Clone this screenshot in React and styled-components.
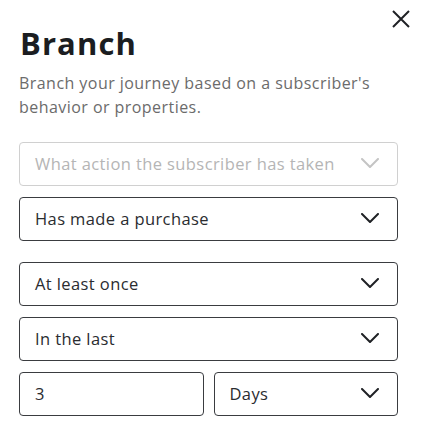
import styled, { createGlobalStyle } from "styled-components";

const GlobalStyle = createGlobalStyle`
    body {
        margin: 0;
        background: #ffffff;
        font-family: "Open Sans", "Lato", sans-serif;
    }
`

function Chevron({ light }) {
    return (
        <svg width="18" height="10" viewBox="0 0 18 10" fill="none">
            <path d="M1 1l8 8 8-8" stroke={light ? "#c4c4c4" : "#1f2125"} strokeWidth="2" strokeLinecap="round" strokeLinejoin="round" />
        </svg>
    );
}

export default function App() {
    return (
        <>
            <GlobalStyle />
            <Panel>
                <Fechar aria-label="close">
                    <svg width="18" height="18" viewBox="0 0 18 18">
                        <path d="M1 1l16 16M17 1L1 17" stroke="#1f2125" strokeWidth="2" />
                    </svg>
                </Fechar>
                <Titulo>Branch</Titulo>
                <Descricao>Branch your journey based on a subscriber's behavior or properties.</Descricao>
                <Campos>
                    <Select light>
                        <span>What action the subscriber has taken</span>
                        <Chevron light />
                    </Select>
                    <Select>
                        <span>Has made a purchase</span>
                        <Chevron />
                    </Select>
                    <Grupo>
                        <Select>
                            <span>At least once</span>
                            <Chevron />
                        </Select>
                        <Select>
                            <span>In the last</span>
                            <Chevron />
                        </Select>
                        <LadoALado>
                            <Select wide>
                                <span>3</span>
                            </Select>
                            <Select wide>
                                <span>Days</span>
                                <Chevron />
                            </Select>
                        </LadoALado>
                    </Grupo>
                </Campos>
            </Panel>
        </>
    )
}

const Panel = styled.div`
    position: relative;
    padding: 26px 23px 20px 19px;
`

const Fechar = styled.div`
    position: absolute;
    top: 10px;
    right: 11px;
    width: 18px;
    height: 18px;
    display: flex;
`

const Titulo = styled.h1`
    margin: 0 0 0 1px;
    font-family: "Open Sans", sans-serif;
    font-weight: 700;
    font-size: 31px;
    line-height: 34px;
    color: #1b1d21;
    letter-spacing: 1.1px;
`

const Descricao = styled.p`
    margin: 11px 0 0 0;
    font-size: 16px;
    line-height: 24px;
    color: #6b6b6b;
    letter-spacing: 0.45px;
    max-width: 380px;
`

const Campos = styled.div`
    display: flex;
    flex-direction: column;
    gap: 11px;
    margin-top: 23px;
`

const Grupo = styled.div`
    display: flex;
    flex-direction: column;
    gap: 11px;
    margin-top: 10px;
`

const Select = styled.div`
    box-sizing: border-box;
    height: 44px;
    flex: ${p => p.wide ? "1 1 0" : "0 0 auto"};
    border: 1px solid ${p => p.light ? "#d0d0d0" : "#3a3c40"};
    border-radius: 4px;
    display: flex;
    align-items: center;
    justify-content: space-between;
    padding: 0 18px 2px 15px;
    font-size: 16.5px;
    letter-spacing: 0.4px;
    color: ${p => p.light ? "#b5b5b5" : "#2a2c30"};
    background: #ffffff;
`

const LadoALado = styled.div`
    display: flex;
    gap: 10px;
`
